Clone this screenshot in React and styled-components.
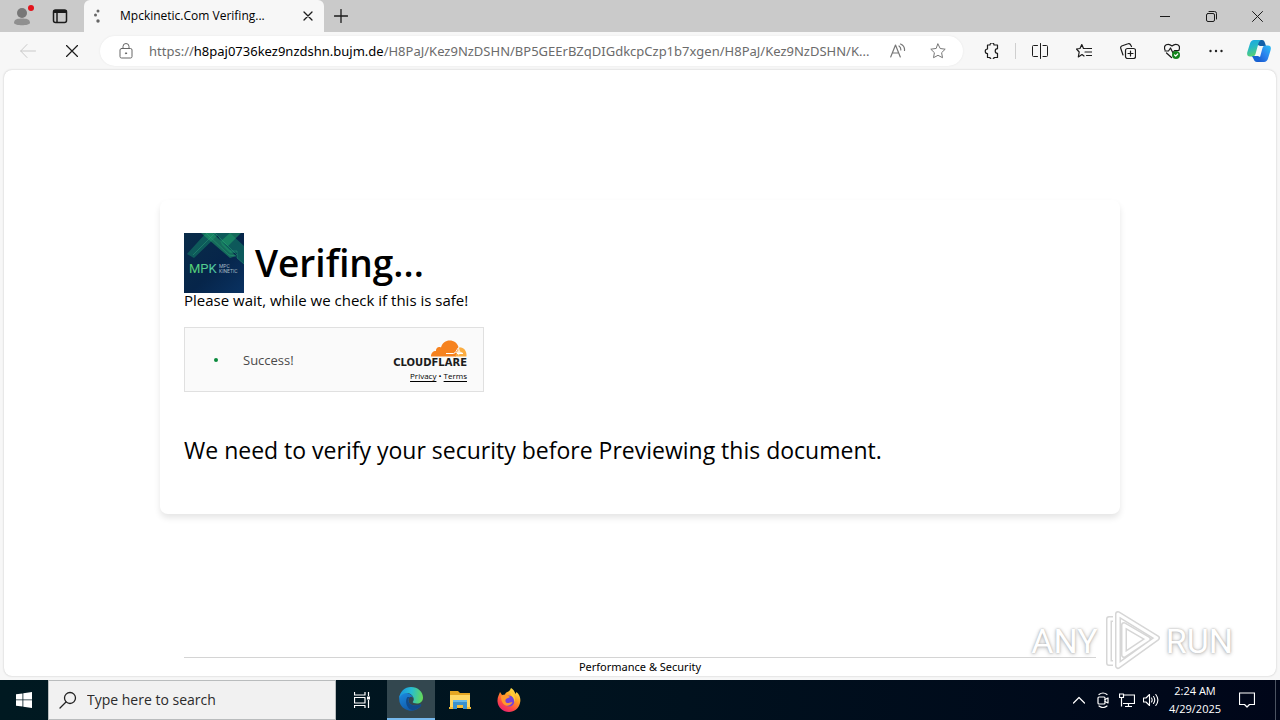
import React from "react";
import styled, { createGlobalStyle } from "styled-components";

const Global = createGlobalStyle`
  *, *::before, *::after { box-sizing: border-box; }
  body {
    margin: 0;
    background: #f7f7f7;
    color: #000;
    font-family: "Open Sans", "Noto Sans", sans-serif;
  }
  button, input { font: inherit; color: inherit; }
  h1, h2, p { margin: 0; }
`;

const Desktop = styled.div`
  display: flex;
  flex-direction: column;
  min-height: 100vh;
`;

const TitleBar = styled.header`
  display: flex;
  align-items: stretch;
  height: 32px;
  background: #cacaca;
`;

const IconButton = styled.button`
  display: flex;
  align-items: center;
  justify-content: center;
  flex: none;
  width: ${(p) => p.$width || 44}px;
  height: 100%;
  padding: 0;
  border: 0;
  background: transparent;
  color: ${(p) => p.$color || "#1b1b1b"};
`;

const TitleLeft = styled.div`
  display: flex;
  width: 84px;
  padding-left: 3px;
`;

const Tab = styled.div`
  display: flex;
  align-items: center;
  width: 240px;
  padding-left: 6px;
  background: #f7f7f7;
  border-radius: 6px 6px 0 0;
`;

const TabTitle = styled.span`
  flex: 1;
  padding-left: 16px;
  font-size: 12px;
  line-height: 16px;
  white-space: nowrap;
`;

const WindowControls = styled.div`
  display: flex;
  margin-left: auto;
`;

const Toolbar = styled.nav`
  display: flex;
  align-items: center;
  height: 38px;
  padding: 0 0 0 6px;
  background: #f7f7f7;
`;

const AddressBar = styled.div`
  display: flex;
  align-items: center;
  flex: 1;
  min-width: 0;
  height: 30px;
  margin: 0 6px;
  padding: 0 5px 0 6px;
  border-radius: 15px;
  background: #fff;
  box-shadow: 0 0 2px #e4e4e4;
`;

const Url = styled.a`
  flex: 1;
  min-width: 0;
  padding-left: 3px;
  color: #6b6b6b;
  font-family: "Noto Sans", sans-serif;
  font-size: 13px;
  line-height: 20px;
  text-decoration: none;
  white-space: nowrap;
`;

const UrlHost = styled.span`
  color: #000;
`;

const Separator = styled.span`
  width: 1px;
  height: 16px;
  margin-right: 2px;
  background: #cfcfcf;
`;

const Viewport = styled.div`
  position: relative;
  display: flex;
  flex: 1;
  flex-direction: column;
  margin: 0 4px 4px;
  background: #fff;
  border-radius: 8px;
  box-shadow: 0 0 2px #bdbdbd;
`;

const Main = styled.main`
  flex: 1;
  width: 100%;
  max-width: 960px;
  margin: 0 auto;
  padding: 130px 0 24px;
`;

const Card = styled.section`
  padding: 33px 24px 48px;
  border-radius: 8px;
  box-shadow: 0 4px 6px rgba(0, 0, 0, 0.1);
`;

const Brand = styled.div`
  display: flex;
  align-items: center;
  gap: 11px;
`;

const Title = styled.h1`
  font-size: 37px;
  font-weight: 600;
  line-height: 60px;
`;

const Lead = styled.p`
  font-size: 15px;
  line-height: 14px;
`;

const Challenge = styled.div`
  display: flex;
  align-items: center;
  width: 300px;
  height: 65px;
  margin: 20px 0 42px;
  padding: 0 16px 0 29px;
  border: 1px solid #e0e0e0;
  background: #fafafa;
`;

const StatusDot = styled.span`
  width: 4px;
  height: 4px;
  margin-right: 25px;
  border-radius: 50%;
  background: #0a8a3c;
`;

const Status = styled.span`
  flex: 1;
  color: #4a4a4a;
  font-size: 13px;
  line-height: 20px;
`;

const Provider = styled.div`
  display: flex;
  flex-direction: column;
  align-items: flex-end;
  padding-top: 4px;
`;

const ProviderName = styled.span`
  font-family: "DejaVu Sans", sans-serif;
  font-size: 10px;
  font-weight: 700;
  line-height: 12px;
  color: #1c1c1c;
`;

const ProviderLinks = styled.span`
  font-size: 8px;
  line-height: 14px;
`;

const SmallLink = styled.a`
  color: #000;
  text-underline-offset: 2px;
`;

const Notice = styled.h2`
  font-size: 23px;
  font-weight: 400;
  line-height: 32px;
`;

const PageFooter = styled.footer`
  width: calc(100% - 48px);
  max-width: 912px;
  margin: 0 auto;
  border-top: 1px solid #d4d4d4;
  font-family: "Noto Sans", sans-serif;
  font-size: 11px;
  line-height: 18px;
  text-align: center;
`;

const Watermark = styled.div`
  position: absolute;
  right: 43px;
  bottom: 3px;
  display: flex;
  align-items: center;
  gap: 5px;
  color: #fff;
  font-family: Roboto, sans-serif;
  font-size: 34px;
  line-height: 64px;
  text-shadow: 0 0 2px #aaa, 0 1px 4px #bbb;
`;

const Taskbar = styled.footer`
  display: flex;
  height: 40px;
  background: linear-gradient(90deg, #001921 0%, #00131f 45%, #000619 100%);
  color: #fff;
`;

const SearchBox = styled.label`
  display: flex;
  align-items: center;
  width: 288px;
  padding-left: 10px;
  border: 1px solid #b9bcbd;
  background: #f1f1f1;
  color: #222;
`;

const SearchInput = styled.input`
  flex: 1;
  min-width: 0;
  padding: 0 0 0 10px;
  border: 0;
  outline: 0;
  background: transparent;
  font-size: 14px;
  line-height: 20px;
  &::placeholder { color: #2b2b2b; opacity: 1; }
`;

const TaskButton = styled(IconButton)`
  color: #fff;
  background: ${(p) => (p.$active ? "#33474f" : "transparent")};
  border-bottom: ${(p) => (p.$active ? "2px solid #76b9ed" : "0")};
`;

const Tray = styled.div`
  display: flex;
  align-items: center;
  margin-left: auto;
`;

const Clock = styled.time`
  width: 64px;
  font-size: 11px;
  line-height: 18px;
  text-align: center;
  white-space: nowrap;
`;

const ShowDesktop = styled.button`
  width: 5px;
  height: 100%;
  margin-left: 8px;
  padding: 0;
  border: 0;
  border-left: 1px solid #4b5361;
  background: transparent;
`;

const Line = ({ size = 16, box = 16, w = 1, children, ...rest }) => (
  <svg width={size} height={size} viewBox={`0 0 ${box} ${box}`} fill="none" stroke="currentColor" strokeWidth={w} strokeLinecap="round" strokeLinejoin="round" aria-hidden="true" {...rest}>
    {children}
  </svg>
);

const CloudLogo = () => (
  <svg width="36" height="17" viewBox="0 0 36 17" aria-hidden="true">
    <path fill="#f6821f" d="M0 16.500C0 13 2 11 5 11C4.500 8 7.500 6 10 7.500C11 3 15 .5 18.500.5C23 .5 26.500 3 27.500 7.200L25 16.500Z" />
    <path fill="#fbad41" d="M28.500 7.300C33 7.500 36 11 35.500 16.500H24L26 12.500Z" />
    <path stroke="#fff" strokeWidth="1" fill="none" d="M15 13.500H22.500C25 13 25.500 10 27.500 7.500M26 13.500H32" />
    <path fill="#fff" d="M28 8l1 3.500 3 1-3 .7-1.500 2.500-.5-2.500-3-.7 3-1z" opacity=".8" />
  </svg>
);

const MpkLogo = () => (
  <svg width="60" height="60" viewBox="0 0 60 60" role="img" aria-label="MPK">
    <defs>
      <linearGradient id="navy" x1="0" y1="0" x2="1" y2="1">
        <stop offset="0" stopColor="#092c49" />
        <stop offset=".55" stopColor="#06254a" />
        <stop offset="1" stopColor="#0a3262" />
      </linearGradient>
      <linearGradient id="mpk" x1="0" y1="0" x2="1" y2="0">
        <stop offset="0" stopColor="#56d36c" />
        <stop offset="1" stopColor="#50c7ad" />
      </linearGradient>
    </defs>
    <path fill="url(#navy)" d="M0 0H60V60H0Z" />
    <path fill="#127b65" opacity=".6" d="M3 21L22 0H36L10 25ZM33 0H46L60 13V31L53 25V20H46L38 12Z" />
    <path fill="#22a36a" opacity=".55" d="M17 0H29L52 23L46 25ZM46 0H57L44 13L37 8Z" />
    <path fill="none" stroke="#31a87c" strokeWidth=".7" opacity=".6" d="M22 0L45 22L52 23M9 22L31 0L53 22M46 18H53V25L60 31" />
    <text x="5" y="40" fill="url(#mpk)" fontFamily="Roboto, sans-serif" fontSize="13">MPK</text>
    <text x="35" y="35" fill="#a7bac5" fontFamily="Roboto, sans-serif" fontSize="5">MPC</text>
    <text x="35" y="40" fill="#a7bac5" fontFamily="Roboto, sans-serif" fontSize="5">KINETIC</text>
  </svg>
);

const CopilotIcon = () => (
  <svg width="24" height="24" viewBox="0 0 24 24" aria-hidden="true">
    <defs>
      <linearGradient id="cpA" x1="0" y1="0" x2=".3" y2="1">
        <stop offset="0" stopColor="#16a5e8" />
        <stop offset=".5" stopColor="#28b9c4" />
        <stop offset="1" stopColor="#56cf74" />
      </linearGradient>
      <linearGradient id="cpB" x1="1" y1="0" x2="0" y2="1">
        <stop offset="0" stopColor="#2cc0f5" />
        <stop offset=".5" stopColor="#2c83ee" />
        <stop offset="1" stopColor="#1553c9" />
      </linearGradient>
    </defs>
    <path fill="#155fa8" d="M9 1H15C17 1 17.600 2.500 18 4L19 7H13L9 5Z" />
    <path fill="url(#cpA)" d="M7 1H14C12 2 11.500 4 11 6L8.500 15C8 17 6.500 17.500 4.500 17.500H3C0 17.500-.3 15 .5 12.500L3 4.500C3.700 2.300 5 1 7 1Z" />
    <path fill="#1764d3" d="M5 17H11L15 19L14.500 23H10C8 23 7 21.500 6.600 20Z" />
    <path fill="url(#cpB)" d="M17 23H10C12 22 12.500 20 13 18L15.500 9C16 7 17.500 6.500 19.500 6.500H21C24 6.500 24.300 9 23.500 11.500L21 19.500C20.300 21.700 19 23 17 23Z" />
  </svg>
);

const EdgeIcon = () => (
  <svg width="24" height="24" viewBox="0 0 24 24" aria-hidden="true">
    <defs>
      <linearGradient id="edgeTop" x1="0" y1=".4" x2="1" y2=".5">
        <stop offset="0" stopColor="#1995df" />
        <stop offset=".5" stopColor="#28bdd0" />
        <stop offset="1" stopColor="#65d957" />
      </linearGradient>
      <linearGradient id="edgeLow" x1="0" y1="0" x2=".6" y2="1">
        <stop offset="0" stopColor="#1b8be0" />
        <stop offset="1" stopColor="#1056a5" />
      </linearGradient>
    </defs>
    <path fill="url(#edgeLow)" d="M.2 11C.2 6 5 5 8 6C12 7 14 9 14 11C12 8 9 11 9.500 14C10.300 18 16 20 21.500 17.500C23 17 22 19 21 20C17 24 11 25 6 22C2 19.700 0 16 .2 11Z" />
    <path fill="#114a8b" d="M8.500 10C6 13 7 19 10.500 22C13 24 17 23 20 20.500C22 19 22.500 17.500 21.500 17.500C15 20 10 17.500 9.300 14C9 12 10 10.500 11.500 10Z" />
    <path fill="url(#edgeTop)" d="M.2 11C1 4.500 5.700 0 12 0C19 0 24 5 24 10.500C24 14.500 21 16.500 18 16.500C15.500 16.500 13.500 15.700 13.700 15C14.800 13.800 15 12.500 14.500 10.700C12.500 5 4 4 .2 11Z" />
  </svg>
);

const FolderIcon = () => (
  <svg width="22" height="20" viewBox="0 0 22 20" aria-hidden="true">
    <path fill="#e5a623" d="M1 1H9L11 3H21V7H1Z" />
    <path fill="#ffd765" d="M1 5H21V18H1Z" />
    <path fill="#3b91cd" d="M4 10H18V19H14V15H8V19H4Z" />
    <path fill="#69b9e8" d="M4 10H18V12H4Z" />
    <path fill="#f7bd37" d="M0 17H4V19H0ZM18 17H22V19H18ZM8 15H14V18H8Z" />
  </svg>
);

const FirefoxIcon = () => (
  <svg width="24" height="24" viewBox="0 0 24 24" aria-hidden="true">
    <defs>
      <linearGradient id="fox" x1=".8" y1="0" x2=".2" y2="1">
        <stop offset="0" stopColor="#fff04e" />
        <stop offset=".4" stopColor="#ff9a22" />
        <stop offset=".7" stopColor="#ff4b43" />
        <stop offset="1" stopColor="#e41978" />
      </linearGradient>
    </defs>
    <path fill="url(#fox)" d="M3 4L5 7L8 6.500C9 3.500 12 4 13 2L14 0C16 1 17.500 3 18.500 6L19.500 4C23 7 24 11 23 15C21.700 20.500 17.500 24 12 24C6 24 1 19.500.5 13.500C.3 9 2 7 3 4Z" />
    <circle cx="12" cy="13" r="5.500" fill="#7542d8" />
    <path fill="#ff982c" d="M4 8C8 6 11 7 13 9C12 10 10 10 9 11C7.500 13 9 15 11 15C13 15 14 14 15.500 14C14 18 9 19 6.500 16C4.500 14 4 11 4 8Z" />
    <path fill="#ffce34" d="M13 3C18 6 19 11 17 15C18 8 13 9 13 3Z" />
  </svg>
);

const STAR = "M8 1L10.200 5.500L15.200 6.200L11.600 9.700L12.500 14.700L8 12.300L3.500 14.700L4.400 9.700L.8 6.200L5.800 5.500Z";

function Browser() {
  return (
    <>
      <TitleBar>
        <TitleLeft>
          <IconButton $width={38} aria-label="Profile">
            <svg width="24" height="24" viewBox="0 0 24 24" aria-hidden="true">
              <circle cx="12" cy="9" r="5" fill="#777" />
              <path fill="#909090" d="M4 19C4 15 8 14.500 12 14.500S20 15 20 19C19 22 5 22 4 19Z" />
              <circle cx="21" cy="4" r="3" fill="#e3131b" />
            </svg>
          </IconButton>
          <IconButton $width={38} aria-label="Tab actions">
            <Line w="1.500"><rect x="1.500" y="2" width="13" height="12.500" rx="2" /><path d="M2.500 3.500H13.500" strokeWidth="3" /><path d="M5 5V14" /></Line>
          </IconButton>
        </TitleLeft>
        <Tab>
          <svg width="14" height="14" viewBox="0 0 14 14" fill="#666" aria-hidden="true">
            <circle cx="8" cy="2" r="1.500" /><circle cx="5.500" cy="6" r="1.500" /><circle cx="8" cy="12" r="1.700" />
          </svg>
          <TabTitle>Mpckinetic.Com Verifing...</TabTitle>
          <IconButton $width={32} aria-label="Close tab">
            <Line size={10} box={10} w="1.300"><path d="M1 1L9 9M9 1L1 9" /></Line>
          </IconButton>
        </Tab>
        <IconButton $width={34} aria-label="New tab">
          <Line size={14} box={14} w="1.300"><path d="M7 .5V13.500M.5 7H13.500" /></Line>
        </IconButton>
        <WindowControls>
          <IconButton $width={46} aria-label="Minimize"><Line size={10} box={10}><path d="M0 5.500H10" /></Line></IconButton>
          <IconButton $width={46} aria-label="Restore"><Line size={11} box={11}><rect x=".5" y="2.500" width="8" height="8" rx="1.500" /><path d="M3 .5H8.500A2 2 0 0 1 10.500 2.500V8" /></Line></IconButton>
          <IconButton $width={46} aria-label="Close"><Line size={11} box={11}><path d="M.5.5L10.500 10.500M10.500.5L.5 10.500" /></Line></IconButton>
        </WindowControls>
      </TitleBar>
      <Toolbar>
        <IconButton $color="#c9c9c9" aria-label="Back"><Line><path d="M15.500 8H.7M7 1.500L.7 8L7 14.500" /></Line></IconButton>
        <IconButton aria-label="Stop loading"><Line size={12} box={12} w="1.200"><path d="M.5.5L11.500 11.500M11.500.5L.5 11.500" /></Line></IconButton>
        <AddressBar>
          <IconButton $width={40} $color="#666" aria-label="Site information">
            <Line><rect x="2" y="5.500" width="12" height="9.500" rx="1.500" /><path d="M5 5.500V3.500A3 3 0 0 1 11 3.500V5.500" /><circle cx="8" cy="10.300" r=".6" fill="currentColor" /></Line>
          </IconButton>
          <Url href="#address">
            https://<UrlHost>h8paj0736kez9nzdshn.bujm.de</UrlHost>/H8PaJ/Kez9NzDSHN/BP5GEErBZqDIGdkcpCzp1b7xgen/H8PaJ/Kez9NzDSHN/K...
          </Url>
          <IconButton $width={40} $color="#777" aria-label="Read aloud">
            <Line w="1.200"><path d="M.7 14L5.500 2L10.300 14M2.400 10H8.600M9 3Q11 4.500 10.800 7M10.500 1Q15 3 14.500 7.500" /></Line>
          </IconButton>
          <IconButton $width={40} $color="#777" aria-label="Add to favorites"><Line><path d={STAR} /></Line></IconButton>
        </AddressBar>
        <IconButton $width={46} aria-label="Extensions">
          <Line w="1.200"><path d="M3.500 2H6A2 2 0 0 1 10 2H13.500V5.700A2.300 2.300 0 0 0 13.500 10.300V14.500H10A2 2 0 0 1 6 14.500H3.500V10.500A2.200 2.200 0 0 1 3.500 6Z" /></Line>
        </IconButton>
        <Separator />
        <IconButton aria-label="Split screen"><Line><path d="M8.500 .5V15.500M5.500 2.500H1.500Q.5 2.500 .5 3.500V12.500Q.5 13.500 1.500 13.500H5.500M11 2.500H14.500Q15.500 2.500 15.500 3.500V12.500Q15.500 13.500 14.500 13.500H11" /></Line></IconButton>
        <IconButton aria-label="Favorites"><Line w="1.200"><path d="M9.500 5.500L7.500 5.500L5.800 1.500L4 5.500L.5 6L3.200 9L2.300 14L6 11.500L8 13M10.500 5.500H16M9 9H16M10.500 12.500H16" /></Line></IconButton>
        <IconButton aria-label="Collections"><Line w="1.200"><rect x="5.500" y="5.500" width="10" height="10" rx="2" /><path d="M10.500 8V13M8 10.500H13M3 12L.8 5.500Q.2 3.800 1.700 3L8 .8Q9.500.2 10.500 1.700L11.500 3.500" /></Line></IconButton>
        <IconButton aria-label="Browser essentials">
          <Line w="1.200"><path d="M1 7C-1 2 4-.5 8 3C12-.5 17 2 15 7M1 8H4.500L6.500 5L9 10L10.500 7.500H15M2.500 10L7.500 14.500" /><circle cx="12" cy="12" r="4" fill="#13851d" stroke="none" /><path d="M10.500 12L11.700 13L13.700 11" stroke="#fff" /></Line>
        </IconButton>
        <IconButton aria-label="Settings and more"><svg width="14" height="4" viewBox="0 0 14 4" fill="#222" aria-hidden="true"><circle cx="1.500" cy="2" r="1.200" /><circle cx="7" cy="2" r="1.200" /><circle cx="12.500" cy="2" r="1.200" /></svg></IconButton>
        <IconButton $width={42} aria-label="Copilot"><CopilotIcon /></IconButton>
      </Toolbar>
    </>
  );
}

function Page() {
  return (
    <Viewport>
      <Main>
        <Card>
          <Brand><MpkLogo /><Title>Verifing...</Title></Brand>
          <Lead>Please wait, while we check if this is safe!</Lead>
          <Challenge>
            <StatusDot />
            <Status role="status">Success!</Status>
            <Provider>
              <CloudLogo />
              <ProviderName>CLOUDFLARE</ProviderName>
              <ProviderLinks><SmallLink href="#privacy">Privacy</SmallLink> • <SmallLink href="#terms">Terms</SmallLink></ProviderLinks>
            </Provider>
          </Challenge>
          <Notice>We need to verify your security before Previewing this document.</Notice>
        </Card>
      </Main>
      <PageFooter>Performance &amp; Security</PageFooter>
      <Watermark>
        <span>ANY</span>
        <svg width="58" height="64" viewBox="0 0 58 64" fill="none" strokeLinejoin="round" aria-hidden="true">
          <g stroke="#d6d6d6" strokeWidth="6"><path d="M15 5L54 29L15 57Z" /><path d="M21 16L45 30L21 46Z" /><path d="M10 10H6V54H10" /></g>
          <g stroke="#fff" strokeWidth="3"><path d="M15 5L54 29L15 57Z" /><path d="M21 16L45 30L21 46Z" /><path d="M10 10H6V54H10" /></g>
        </svg>
        <span>RUN</span>
      </Watermark>
    </Viewport>
  );
}

function SystemTaskbar() {
  return (
    <Taskbar>
      <TaskButton $width={48} aria-label="Start">
        <svg width="16" height="16" viewBox="0 0 16 16" fill="#fff" aria-hidden="true"><path d="M0 2.300L6.500 1.400V7.500H0ZM7.300 1.300L16 0V7.500H7.300ZM0 8.300H6.500V14.600L0 13.700ZM7.300 8.300H16V16L7.300 14.700Z" /></svg>
      </TaskButton>
      <SearchBox>
        <Line size={18} box={18} w="1.300"><circle cx="11" cy="7" r="5.500" /><path d="M7 11L1 17" /></Line>
        <SearchInput aria-label="Search" placeholder="Type here to search" />
      </SearchBox>
      <TaskButton $width={51} aria-label="Task view">
        <Line w="1.200" strokeLinecap="butt"><path d="M.5 0V3H11V0M.5 5.500H11V11H.5ZM.5 16V13.500H11V16M14.500 0V4M14.500 8V16" /><path d="M13 4.500H16V7.500H13Z" fill="currentColor" stroke="none" /></Line>
      </TaskButton>
      <TaskButton $width={48} $active aria-label="Microsoft Edge"><EdgeIcon /></TaskButton>
      <TaskButton $width={49} aria-label="File Explorer"><FolderIcon /></TaskButton>
      <TaskButton $width={49} aria-label="Firefox"><FirefoxIcon /></TaskButton>
      <Tray>
        <TaskButton $width={24} aria-label="Show hidden icons"><Line size={12} box={12} w="1.200"><path d="M.5 9L6 3.500L11.500 9" /></Line></TaskButton>
        <TaskButton $width={24} aria-label="Meet now"><Line w="1.200"><rect x="3" y="5" width="7" height="7" rx="1" /><path d="M10 7.500L13 6V11L10 9.500M4 2.500Q8-.5 12 2.500M4 14Q8 17 12 14" /></Line></TaskButton>
        <TaskButton $width={24} aria-label="Network"><Line w="1.200" strokeLinecap="butt"><path d="M5 3H15.500V11.500H4M9.500 11.500V14.500M6 14.500H13M.5 2H4.500V5.500H.5ZM2.500 5.500V14.500" /></Line></TaskButton>
        <TaskButton $width={24} aria-label="Volume"><Line w="1.100"><path d="M.5 6H3L6.500 2.500V13.500L3 10H.5ZM8.500 6Q9.800 8 8.500 10M10.500 4.500Q13 8 10.500 11.500M12.800 2.500Q17 8 12.800 13.500" /></Line></TaskButton>
        <Clock>2:24 AM<br />4/29/2025</Clock>
        <TaskButton $width={40} aria-label="Notifications"><Line w="1.200"><path d="M.5 1H15.500V12.500H10.500L8 15L5.500 12.500H.5Z" /></Line></TaskButton>
        <ShowDesktop aria-label="Show desktop" />
      </Tray>
    </Taskbar>
  );
}

export default function App() {
  return (
    <Desktop>
      <Global />
      <Browser />
      <Page />
      <SystemTaskbar />
    </Desktop>
  );
}
